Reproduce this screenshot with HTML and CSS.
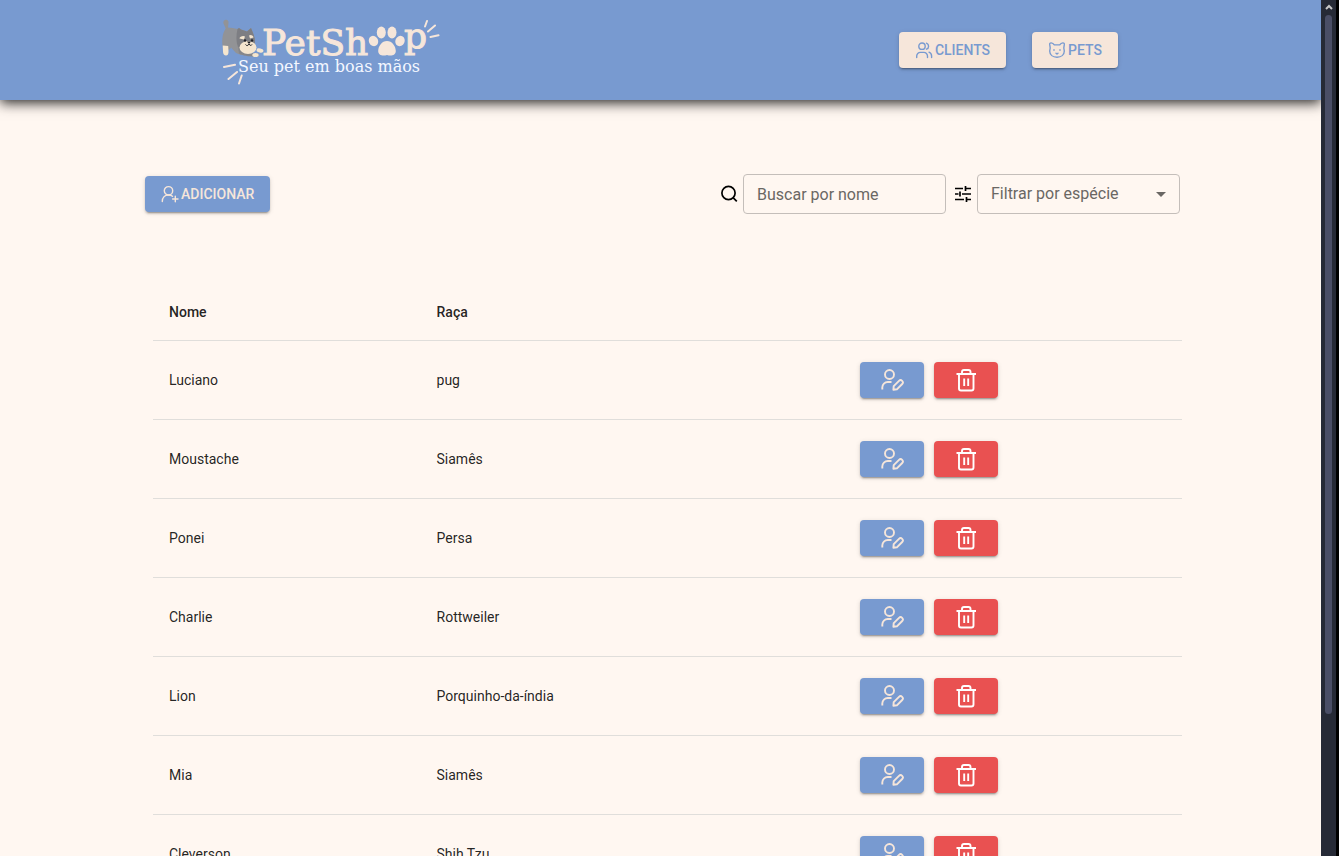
FILE: index.html
```html
<!DOCTYPE html>
<html lang="pt-BR">
<head>
<meta charset="utf-8">
<title>PetShop</title>
<link rel="stylesheet" href="styles.css">
</head>
<body>
<svg class="sprite" aria-hidden="true">
  <defs>
    <symbol id="i-edit" viewBox="0 0 24 24"><circle cx="9.500" cy="6.500" r="4.500"/><path d="M2.300 21.500v-2a5.500 5.500 0 0 1 5.500-5.500H11.500"/><path d="M13.400 21.800l.3-3.600 5.300-5.300a2.100 2.100 0 0 1 3.200 3.100l-5.300 5.300z"/></symbol>
    <symbol id="i-trash" viewBox="0 0 24 24"><path d="M2.500 6h19.500M5 6v14.500a2 2 0 0 0 2 2h10.500a2 2 0 0 0 2-2V6M8 6V4a2 2 0 0 1 2-2h4.500a2 2 0 0 1 2 2v2M10.200 10.500v7.500M14.200 10.500v7.500"/></symbol>
  </defs>
</svg>
<div class="window">
  <div class="page">
    <header class="header">
      <a class="brand" href="#" aria-label="PetShop">
        <svg width="220" height="68" viewBox="0 0 220 68">
          <path d="M5 2c2-1 4 1 3.500 3L8 9.500c3 .5 6 .5 9.500 1.500l1.500-1 2 1.500 6 2 4-3.500 2 5c1.500 3 2 7 2 11l-2 8-12 3-5-2-5-5.500c-1 2-2 2.500-3 2L2.700 29c-.5-4-.7-7 0-11 .5-3 1.500-5 3-7.500L3.500 5.500C3 4 3.500 2.500 5 2z" fill="#929396"/>
          <path d="M17.500 11l1.500-1 2 1.500 6 2 4-3.500 2 5c1.500 3 2 7 2 11l-8 5-9-2c-2-5-2-12-.5-18z" fill="#7d7e83"/>
          <path d="M2.700 27.500l5.500.5.300 5c.2 3-.8 4.500-2.500 4.500s-3-1.500-3-4z" fill="#f5e6cf"/>
          <path d="M18 29l3 1c2 4 8 6 13 5l4 .5c1.500 1 1 3-1 3-5 .5-14-.5-18-3z" fill="#85868a"/>
          <ellipse cx="28" cy="29.500" rx="8.500" ry="6.500" fill="#f5e6cf"/>
          <path d="M19.500 20.500c0-2 4-3.500 5.500-2l-1 3zM29 17.500c1.500-1.500 4.500 0 4.500 2l-3.500 1z" fill="#f5e6cf"/>
          <ellipse cx="35.500" cy="37" rx="3.200" ry="2" fill="#f5e6cf"/>
          <ellipse cx="40" cy="32.500" rx="3.500" ry="2" transform="rotate(12 40 32.500)" fill="#f5e6cf"/>
          <circle cx="25" cy="22.500" r="1.200" fill="#1f2026"/><circle cx="32" cy="22.500" r="1.200" fill="#1f2026"/>
          <path d="M27 23.500h4L29 26z" fill="#1f2026"/>
          <path d="M25.500 26.500c1 1.500 2.500 1.500 3.500-.5 1 2 2.500 1.500 3 .5" fill="none" stroke="#1f2026" stroke-width="1"/>
          <text class="brand-name" x="42" y="37">PetSh</text>
          <text class="brand-name" x="184" y="30">p</text>
          <g fill="#f6e6da">
            <ellipse cx="153.500" cy="23" rx="4.600" ry="5.300" transform="rotate(-25 153.500 23)"/>
            <ellipse cx="161.300" cy="14.500" rx="4.500" ry="6"/>
            <ellipse cx="172" cy="14.500" rx="4.500" ry="6"/>
            <ellipse cx="180" cy="23" rx="4.600" ry="5.300" transform="rotate(25 180 23)"/>
            <path d="M167 23c5 0 8.800 5 8.800 10 0 4-4.300 5.500-8.800 4-4.500 1.500-8.800 0-8.800-4 0-5 3.800-10 8.800-10z"/>
          </g>
          <text class="brand-slogan" x="18" y="54">Seu pet em boas mãos</text>
          <path d="M205 8.500l2-5.500M208 13.500l7-6M210.500 19l8-1.700M4 49l11-2.200M8.500 61l8.500-7M19 65.500l2.700-8" fill="none" stroke="#f6e6da" stroke-width="2" stroke-linecap="round"/>
        </svg>
      </a>
      <nav class="nav">
        <button class="btn btn-light" type="button">
          <svg class="icon-sm" viewBox="-1 -1 18 18"><circle cx="6" cy="4.200" r="3.200"/><path d="M.7 15.500V14a3.600 3.600 0 0 1 3.600-3.600h3.600a3.600 3.600 0 0 1 3.600 3.600v1.500M10.500 1.200a3.200 3.200 0 0 1 0 6M13 10.200c1.800.6 2.600 2 2.600 3.800v1.500"/></svg>CLIENTS</button>
        <button class="btn btn-light" type="button">
          <svg class="icon-sm" viewBox="-1 -1 18 18"><path d="M2.200.9c1.400.2 2.300.9 3.100 2h5.400c.8-1.100 1.700-1.800 3.100-2 1-.1 1.600.5 1.500 1.500l-.5 3.600.5 3c0 3.800-3.200 6.200-7.300 6.200S.7 12.800.7 9l.5-3L.7 2.400C.6 1.400 1.200.8 2.200.9zM5 7.800v.4M11 7.800v.4M7 11.200l1 .8 1-.8"/></svg>PETS</button>
      </nav>
    </header>
    <main class="main">
      <div class="toolbar">
        <button class="btn btn-blue" type="button">
          <svg class="icon-sm" viewBox="-1 -1 18 18"><circle cx="6.500" cy="4.800" r="4.200"/><path d="M.3 15.500c0-4 2.500-6.500 6.200-6.500 1.800 0 3 .5 4 1.300M13.300 10.300v5.400M10.600 13h5.400"/></svg>ADICIONAR</button>
        <div class="filters">
          <label for="busca" aria-label="Buscar"><svg class="icon-md" viewBox="0 0 18 18"><circle cx="8.500" cy="8" r="6.600"/><path d="M13.300 12.800l3.500 3.500"/></svg></label>
          <input class="field" id="busca" type="text" placeholder="Buscar por nome">
          <label for="especie" aria-label="Filtrar"><svg class="icon-md" viewBox="0 0 18 18"><path d="M1 3.500h8M12 3.500h5M11.500 1v5M1 9h3.500M8 9h9M6 6.500v5M1 14.500h9M13 14.500h4M12.500 12v5"/></svg></label>
          <div class="select">
            <select class="field" id="especie"><option>Filtrar por espécie</option></select>
            <svg class="caret" viewBox="0 0 10 5"><path d="M0 0h10L5 5z"/></svg>
          </div>
        </div>
      </div>
      <table class="table">
        <thead><tr><th class="col-name">Nome</th><th class="col-breed">Raça</th><td></td></tr></thead>
        <tbody id="rows"></tbody>
      </table>
    </main>
  </div>
  <div class="scroll" aria-hidden="true">
    <svg class="scroll-arrow" viewBox="0 0 8 6"><path d="M1 5l3-3 3 3"/></svg>
    <div class="scroll-thumb"></div>
  </div>
</div>
<script src="app.js"></script>
</body>
</html>
```
FILE: app.js
```js
const pets = [
  ["Luciano", "pug"],
  ["Moustache", "Siamês"],
  ["Ponei", "Persa"],
  ["Charlie", "Rottweiler"],
  ["Lion", "Porquinho-da-índia"],
  ["Mia", "Siamês"],
  ["Cleverson", "Shih Tzu"],
];

document.getElementById("rows").innerHTML = pets.map(([name, breed]) => `
  <tr>
    <td>${name}</td>
    <td>${breed}</td>
    <td><div class="actions">
      <button class="btn btn-blue" type="button" aria-label="Editar ${name}"><svg class="icon-lg"><use href="#i-edit"/></svg></button>
      <button class="btn btn-red" type="button" aria-label="Excluir ${name}"><svg class="icon-lg"><use href="#i-trash"/></svg></button>
    </div></td>
  </tr>`).join("");
```
FILE: styles.css
```css
* { box-sizing: border-box; }
body { margin: 0; background: #fff7f1; color: rgba(0, 0, 0, 0.87); font-family: Roboto, "Liberation Sans", sans-serif; font-size: 14px; }
.sprite { position: absolute; width: 0; height: 0; }
.window { display: flex; height: 100vh; overflow: hidden; }
.page { flex: 1; min-width: 0; overflow: hidden; }
svg { display: block; fill: none; stroke: none; }

.header { display: flex; align-items: center; justify-content: space-between; height: 100px; padding: 0 203px 0 220px; background: #789ad0; box-shadow: 0 3px 12px rgba(0, 0, 0, 0.85); }
.brand { padding-top: 4px; }
.brand-name { font-family: "DejaVu Serif", serif; font-size: 36px; fill: #f6e6da; stroke: #f6e6da; stroke-width: 1px; }
.brand-slogan { font-family: "DejaVu Serif", serif; font-size: 16px; fill: #f4f7ff; }
.nav { display: flex; gap: 26px; }

.btn { display: inline-flex; align-items: center; justify-content: center; gap: 2px; min-width: 64px; height: 36px; padding: 0 16px; border: 0; border-radius: 4px; font: 500 14px/24px Roboto, "Liberation Sans", sans-serif; box-shadow: 0 3px 1px -2px rgba(0, 0, 0, 0.2), 0 2px 2px rgba(0, 0, 0, 0.14), 0 1px 5px rgba(0, 0, 0, 0.12); cursor: pointer; }
.btn-light { background: #f6e6da; color: #789ad0; }
.btn-blue { background: #789ad0; color: #f6e6da; }
.btn-red { background: #e95151; color: #ffffff; }
.icon-sm { width: 18px; height: 18px; stroke: currentColor; stroke-width: 1.4; stroke-linecap: round; stroke-linejoin: round; }
.icon-md { width: 18px; height: 18px; stroke: #000000; stroke-width: 1.7; }
.icon-lg { width: 24px; height: 24px; stroke: currentColor; stroke-width: 1.9; stroke-linejoin: round; }

.main { padding: 74px 139px 0 145px; }
.toolbar { display: flex; align-items: center; justify-content: space-between; padding-right: 2px; }
.filters { display: flex; align-items: center; gap: 5px; }
.filters label { padding-left: 3px; }
.field { display: block; width: 203px; height: 40px; padding: 0 13px; border: 1px solid #c4beba; border-radius: 4px; background: transparent; color: #6a6764; font: 400 16px/24px Roboto, "Liberation Sans", sans-serif; appearance: none; }
.field::placeholder { color: #6a6764; opacity: 1; }
.select { display: grid; align-items: center; }
.select > * { grid-area: 1 / 1; }
.caret { width: 10px; height: 5px; margin-right: 14px; justify-self: end; fill: #6a6764; pointer-events: none; }

.table { width: calc(100% - 8px); margin: 70px 0 0 8px; border-collapse: separate; border-spacing: 0; table-layout: fixed; line-height: 24px; }
.table th, .table td { padding: 16px; border-bottom: 1px solid #e0dedb; text-align: left; }
.table th { font-weight: 500; }
.table td { height: 79px; }
.table thead td { height: 57px; }
.col-name { width: 26%; }
.col-breed { width: 24.8%; }
.actions { display: flex; justify-content: center; gap: 10px; }

.scroll { display: flex; flex: 0 0 18px; flex-direction: column; align-items: center; gap: 5px; padding-top: 4px; background: #262a36; border-right: 3px solid #000000; }
.scroll-arrow { width: 8px; height: 6px; stroke: #c8c8c8; stroke-width: 2; }
.scroll-thumb { width: 7px; height: 82%; border-radius: 4px; background: #4a4e66; }
```
